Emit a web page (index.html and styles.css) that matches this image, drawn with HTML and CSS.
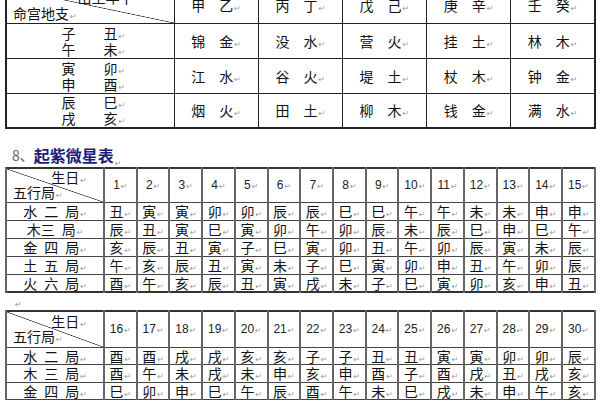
FILE: index.html
```html
<!DOCTYPE html>
<html lang="zh">
<head>
<meta charset="utf-8">
<link rel="stylesheet" href="styles.css">
</head>
<body>
<div class="page">
  <table class="t1">
    <colgroup><col class="c0"><col><col><col><col><col></colgroup>
    <tr class="h1">
      <td class="diag1"><div class="dtop">出生年干</div><div class="dbot">命宫地支<i>↵</i></div></td>
      <td>甲　乙<i>↵</i></td><td>丙　丁<i>↵</i></td><td>戊　己<i>↵</i></td><td>庚　辛<i>↵</i></td><td>壬　癸<i>↵</i></td>
    </tr>
    <tr class="r1">
      <td class="zhi">子　　丑<i>↵</i><br>午　　未<i>↵</i></td>
      <td>锦　金<i>↵</i></td><td>没　水<i>↵</i></td><td>营　火<i>↵</i></td><td>挂　土<i>↵</i></td><td>林　木<i>↵</i></td>
    </tr>
    <tr class="r1">
      <td class="zhi">寅　　卯<i>↵</i><br>申　　酉<i>↵</i></td>
      <td>江　水<i>↵</i></td><td>谷　火<i>↵</i></td><td>堤　土<i>↵</i></td><td>杖　木<i>↵</i></td><td>钟　金<i>↵</i></td>
    </tr>
    <tr class="r1">
      <td class="zhi">辰　　巳<i>↵</i><br>戌　　亥<i>↵</i></td>
      <td>烟　火<i>↵</i></td><td>田　土<i>↵</i></td><td>柳　木<i>↵</i></td><td>钱　金<i>↵</i></td><td>满　水<i>↵</i></td>
    </tr>
  </table>

  <div class="label"><span class="num">8、</span><b>起紫微星表</b><i>↵</i></div>

  <table class="t2">
    <colgroup><col class="c0"><col><col><col><col><col><col><col><col><col><col><col><col><col><col><col></colgroup>
    <tr class="h2">
      <td class="diag2"><div class="dtop">生日<i>↵</i></div><div class="dbot">五行局<i>↵</i></div></td>
      <td class="n">1<i>↵</i></td><td class="n">2<i>↵</i></td><td class="n">3<i>↵</i></td><td class="n">4<i>↵</i></td><td class="n">5<i>↵</i></td><td class="n">6<i>↵</i></td><td class="n">7<i>↵</i></td><td class="n">8<i>↵</i></td><td class="n">9<i>↵</i></td><td class="n">10<i>↵</i></td><td class="n">11<i>↵</i></td><td class="n">12<i>↵</i></td><td class="n">13<i>↵</i></td><td class="n">14<i>↵</i></td><td class="n">15<i>↵</i></td>
    </tr>
    <tr class="r2"><td class="rh">水&ensp;二&ensp;局<i>↵</i></td><td>丑<i>↵</i></td><td>寅<i>↵</i></td><td>寅<i>↵</i></td><td>卯<i>↵</i></td><td>卯<i>↵</i></td><td>辰<i>↵</i></td><td>辰<i>↵</i></td><td>巳<i>↵</i></td><td>巳<i>↵</i></td><td>午<i>↵</i></td><td>午<i>↵</i></td><td>未<i>↵</i></td><td>未<i>↵</i></td><td>申<i>↵</i></td><td>申<i>↵</i></td></tr>
    <tr class="r2"><td class="rh">木三&ensp;局<i>↵</i></td><td>辰<i>↵</i></td><td>丑<i>↵</i></td><td>寅<i>↵</i></td><td>巳<i>↵</i></td><td>寅<i>↵</i></td><td>卯<i>↵</i></td><td>午<i>↵</i></td><td>卯<i>↵</i></td><td>辰<i>↵</i></td><td>未<i>↵</i></td><td>辰<i>↵</i></td><td>巳<i>↵</i></td><td>申<i>↵</i></td><td>巳<i>↵</i></td><td>午<i>↵</i></td></tr>
    <tr class="r2"><td class="rh">金&ensp;四&ensp;局<i>↵</i></td><td>亥<i>↵</i></td><td>辰<i>↵</i></td><td>丑<i>↵</i></td><td>寅<i>↵</i></td><td>子<i>↵</i></td><td>巳<i>↵</i></td><td>寅<i>↵</i></td><td>卯<i>↵</i></td><td>丑<i>↵</i></td><td>午<i>↵</i></td><td>卯<i>↵</i></td><td>辰<i>↵</i></td><td>寅<i>↵</i></td><td>未<i>↵</i></td><td>辰<i>↵</i></td></tr>
    <tr class="r2"><td class="rh">土&ensp;五&ensp;局<i>↵</i></td><td>午<i>↵</i></td><td>亥<i>↵</i></td><td>辰<i>↵</i></td><td>丑<i>↵</i></td><td>寅<i>↵</i></td><td>未<i>↵</i></td><td>子<i>↵</i></td><td>巳<i>↵</i></td><td>寅<i>↵</i></td><td>卯<i>↵</i></td><td>申<i>↵</i></td><td>丑<i>↵</i></td><td>午<i>↵</i></td><td>卯<i>↵</i></td><td>辰<i>↵</i></td></tr>
    <tr class="r2"><td class="rh">火&ensp;六&ensp;局<i>↵</i></td><td>酉<i>↵</i></td><td>午<i>↵</i></td><td>亥<i>↵</i></td><td>辰<i>↵</i></td><td>丑<i>↵</i></td><td>寅<i>↵</i></td><td>戌<i>↵</i></td><td>未<i>↵</i></td><td>子<i>↵</i></td><td>巳<i>↵</i></td><td>寅<i>↵</i></td><td>卯<i>↵</i></td><td>亥<i>↵</i></td><td>申<i>↵</i></td><td>丑<i>↵</i></td></tr>
  </table>

  <div class="para"><i>↵</i></div>

  <table class="t2 t3">
    <colgroup><col class="c0"><col><col><col><col><col><col><col><col><col><col><col><col><col><col><col></colgroup>
    <tr class="h3">
      <td class="diag2"><div class="dtop">生日<i>↵</i></div><div class="dbot">五行局<i>↵</i></div></td>
      <td class="n">16<i>↵</i></td><td class="n">17<i>↵</i></td><td class="n">18<i>↵</i></td><td class="n">19<i>↵</i></td><td class="n">20<i>↵</i></td><td class="n">21<i>↵</i></td><td class="n">22<i>↵</i></td><td class="n">23<i>↵</i></td><td class="n">24<i>↵</i></td><td class="n">25<i>↵</i></td><td class="n">26<i>↵</i></td><td class="n">27<i>↵</i></td><td class="n">28<i>↵</i></td><td class="n">29<i>↵</i></td><td class="n">30<i>↵</i></td>
    </tr>
    <tr class="r3"><td class="rh">水&ensp;二&ensp;局<i>↵</i></td><td>酉<i>↵</i></td><td>酉<i>↵</i></td><td>戌<i>↵</i></td><td>戌<i>↵</i></td><td>亥<i>↵</i></td><td>亥<i>↵</i></td><td>子<i>↵</i></td><td>子<i>↵</i></td><td>丑<i>↵</i></td><td>丑<i>↵</i></td><td>寅<i>↵</i></td><td>寅<i>↵</i></td><td>卯<i>↵</i></td><td>卯<i>↵</i></td><td>辰<i>↵</i></td></tr>
    <tr class="r3"><td class="rh">木&ensp;三&ensp;局<i>↵</i></td><td>酉<i>↵</i></td><td>午<i>↵</i></td><td>未<i>↵</i></td><td>戌<i>↵</i></td><td>未<i>↵</i></td><td>申<i>↵</i></td><td>亥<i>↵</i></td><td>申<i>↵</i></td><td>酉<i>↵</i></td><td>子<i>↵</i></td><td>酉<i>↵</i></td><td>戌<i>↵</i></td><td>丑<i>↵</i></td><td>戌<i>↵</i></td><td>亥<i>↵</i></td></tr>
    <tr class="r3"><td class="rh">金&ensp;四&ensp;局<i>↵</i></td><td>巳<i>↵</i></td><td>卯<i>↵</i></td><td>申<i>↵</i></td><td>巳<i>↵</i></td><td>午<i>↵</i></td><td>辰<i>↵</i></td><td>酉<i>↵</i></td><td>午<i>↵</i></td><td>未<i>↵</i></td><td>巳<i>↵</i></td><td>戌<i>↵</i></td><td>未<i>↵</i></td><td>申<i>↵</i></td><td>午<i>↵</i></td><td>亥<i>↵</i></td></tr>
    <tr class="r3"><td class="rh">土&ensp;五&ensp;局<i>↵</i></td><td>酉<i>↵</i></td><td>寅<i>↵</i></td><td>未<i>↵</i></td><td>辰<i>↵</i></td><td>巳<i>↵</i></td><td>戌<i>↵</i></td><td>卯<i>↵</i></td><td>申<i>↵</i></td><td>巳<i>↵</i></td><td>午<i>↵</i></td><td>亥<i>↵</i></td><td>辰<i>↵</i></td><td>酉<i>↵</i></td><td>午<i>↵</i></td><td>未<i>↵</i></td></tr>
  </table>
</div>
</body>
</html>
```

FILE: styles.css
```css
* { box-sizing: border-box; }

html, body {
  margin: 0;
  padding: 0;
  background: #fff;
}

body {
  font-family: "Noto Sans CJK SC", "Noto Sans", sans-serif;
  color: #111;
  overflow: hidden;
}

.page {
  width: 600px;
  height: 400px;
  padding-left: 5px;
  overflow: hidden;
}

i {
  font-style: normal;
  font-family: "DejaVu Sans", sans-serif;
  font-size: 8px;
  line-height: 0;
  color: #9a9a9a;
  margin-left: 1px;
}

table {
  border-collapse: collapse;
  table-layout: fixed;
}

td {
  padding: 0;
  text-align: center;
  vertical-align: middle;
  white-space: nowrap;
  line-height: 14px;
}

td > div { line-height: 16px; height: 16px; }

/* ---------- table 1 ---------- */
.t1 {
  width: 591px;
  margin-top: -14px;
  border: 2px solid #222;
}

.t1 .c0 { width: 168px; }

.t1 td {
  border: 1px solid #222;
  font-size: 14px;
}

.t1 .h1 { height: 36px; }
.t1 .r1 { height: 35px; }

.t1 td.zhi {
  padding-left: 6px;
  line-height: 16px;
}

.diag1, .diag2 {
  background: linear-gradient(to top right, transparent calc(50% - 0.7px), #333 50%, transparent calc(50% + 0.7px));
}

.diag1 .dtop {
  text-align: right;
  padding-right: 40px;
}

.diag1 .dbot {
  text-align: left;
  padding-left: 6px;
}

/* ---------- heading ---------- */
.label {
  height: 38px;
  display: flex;
  align-items: flex-end;
  padding-left: 7px;
  padding-bottom: 3px;
  line-height: 18px;
}

.label .num {
  font-size: 14px;
  color: #666;
}

.label b {
  font-size: 16px;
  color: #1d1d80;
  font-weight: 700;
}

/* ---------- tables 2 & 3 ---------- */
.t2 {
  width: 591px;
  border: 2px solid #333;
}

.t2 .c0 { width: 98px; }

.t2 td {
  border: 1px solid #444;
  border-left: 2px solid #666;
  border-right: 2px solid #666;
  font-size: 14px;
}

.t2 td.n {
  font-family: "Liberation Sans", sans-serif;
  font-size: 12px;
  color: #222;
}

.t2 .rh {
  font-size: 14px;
}

.t2 .h2 { height: 34px; }
.t2 .r2 { height: 18px; }
.t3 .h3 { height: 36px; }
.t3 .r3 { height: 17.5px; }

.diag2 > div { height: 15px; line-height: 15px; }

.diag2 .dtop {
  text-align: right;
  padding-right: 16px;
}

.diag2 .dbot {
  text-align: left;
  padding-left: 6px;
}

.para {
  height: 17px;
  padding-left: 9px;
  line-height: 14px;
}
```
